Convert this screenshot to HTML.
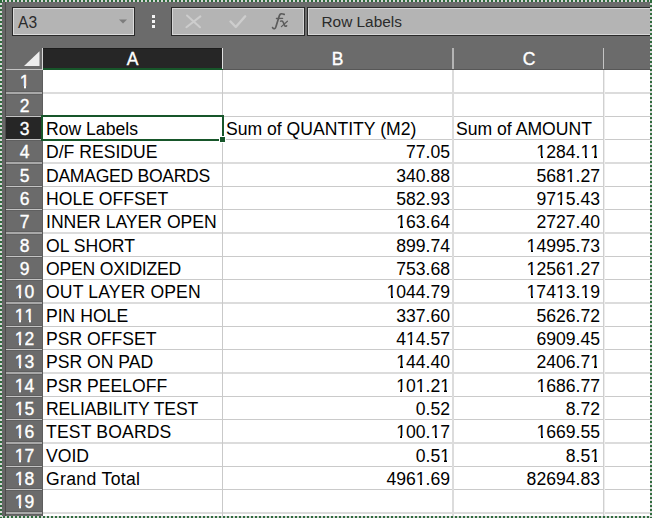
<!DOCTYPE html><html><head><meta charset="utf-8"><style>
*{margin:0;padding:0;box-sizing:border-box}
html,body{width:652px;height:518px;overflow:hidden}
body{position:relative;background:#6b6b6b;font-family:"Liberation Sans",sans-serif}
.a{position:absolute}
.t{position:absolute;white-space:nowrap;font-size:17.6px;line-height:20px;color:#000}
.r{text-align:right}
.o{position:relative}
.o::before,.o::after{content:"";position:absolute;bottom:0.13em;height:0.21em;background:var(--bg,#fff)}
.o::before{left:-0.03em;width:0.27em}
.o::after{left:0.36em;width:0.2em}
.h .o{--bg:#6b6b6b}
.h .o::before{width:0.275em}.h .o::after{left:0.352em;width:0.23em}
.h{position:absolute;white-space:nowrap;font-size:17.5px;line-height:20px;color:#fff;text-align:center;-webkit-text-stroke:0.35px #fff}
</style></head><body>

<div class="a" style="left:2px;top:2px;width:3px;height:514px;background:#666"></div>
<div class="a" style="left:5px;top:2px;width:1px;height:514px;background:#4b4b4b"></div>
<div class="a" style="left:12px;top:7px;width:123px;height:29px;background:#b4b4b4;border:1px solid #2a2a2a;box-shadow:inset 0 0 0 1px #dcdcdc"></div>
<div class="a" style="left:18px;top:13.6px;font-size:15.6px;line-height:17px;color:#2b2b2b">A3</div>
<svg class="a" style="left:118px;top:18px" width="10" height="7"><path d="M1 1.5 L9 1.5 L5 5.5 Z" fill="#7c7c7c"/></svg>
<div class="a" style="left:152px;top:15px;width:3px;height:3px;background:#f4f4f4"></div>
<div class="a" style="left:152px;top:20px;width:3px;height:3px;background:#f4f4f4"></div>
<div class="a" style="left:152px;top:25px;width:3px;height:3px;background:#f4f4f4"></div>
<div class="a" style="left:171px;top:7px;width:134px;height:29px;background:#b4b4b4;border:1px solid #2a2a2a;box-shadow:inset 0 0 0 1px #d6d6d6"></div>
<svg class="a" style="left:184px;top:14px" width="18" height="16"><path d="M3 1.5 L16 13.3 M16.4 2.4 L2.4 13.2" stroke="#cdcdcd" stroke-width="2" stroke-linecap="round" fill="none"/></svg>
<svg class="a" style="left:227px;top:12px" width="22" height="18"><path d="M3.5 9.5 L8.8 15 L18.2 4.3" stroke="#cdcdcd" stroke-width="2.4" stroke-linecap="round" stroke-linejoin="round" fill="none"/></svg>
<svg class="a" style="left:268px;top:10px" width="24" height="22"><g stroke="#5c5c5c" fill="none" stroke-linecap="round"><path d="M4.6 17.6 C5.8 19.6 7.4 18.8 8 16.6 L11.4 5.6 C12 3.6 13.6 3.3 16.2 4.4" stroke-width="1.7"/><path d="M8.4 8.5 L14.6 8.4" stroke-width="1.3"/><path d="M12.6 11.2 C14.2 10.4 14.8 11.2 15.4 12.6 L16.6 15.4 C17 16.4 17.6 16.6 18.6 15.8" stroke-width="1.5"/><path d="M19.4 11.2 L13.4 16.6" stroke-width="1.2"/></g></svg>
<div class="a" style="left:307px;top:7px;width:350px;height:29px;background:#b4b4b4;border:1px solid #2a2a2a;box-shadow:inset 0 0 0 1px #d6d6d6"></div>
<div class="a" style="left:321.5px;top:12.9px;font-size:15.4px;line-height:17px;color:#2b2b2b">Row Labels</div>
<div class="a" style="left:43px;top:48px;width:179px;height:20px;background:#262626"></div>
<div class="a" style="left:43px;top:48px;width:179px;height:1px;background:#1c1c1c"></div>
<div class="a" style="left:43px;top:68px;width:180px;height:2px;background:#17562a"></div>
<div class="a" style="left:223px;top:69px;width:427px;height:1px;background:#575757"></div>
<div class="a" style="left:42px;top:48px;width:1px;height:22px;background:#d8d8d8"></div>
<div class="a" style="left:222px;top:48px;width:1px;height:21px;background:#e0e0e0"></div>
<div class="a" style="left:452px;top:48px;width:2px;height:21px;background:#b4b4b4"></div>
<div class="a" style="left:603px;top:48px;width:1px;height:21px;background:#c4c4c4"></div>
<div class="h" style="left:43px;top:49.4px;width:179px;">A</div>
<div class="h" style="left:223px;top:49.4px;width:229px;">B</div>
<div class="h" style="left:454px;top:49.4px;width:150px;">C</div>
<svg class="a" style="left:22px;top:50px" width="20" height="18"><path d="M2 16 L17.5 16 L17.5 1.3 Z" fill="#ededed"/></svg>
<div class="a" style="left:43px;top:70px;width:607px;height:446px;background:#fff"></div>
<div class="a" style="left:6px;top:69px;width:36px;height:1px;background:#c4c4c4"></div>
<div class="a" style="left:43px;top:92px;width:607px;height:2px;background:#dcdcdc"></div>
<div class="a" style="left:6px;top:91px;width:36px;height:4px;background:#5f5f5f"></div>
<div class="a" style="left:6px;top:92px;width:36px;height:2px;background:#a8a8a8"></div>
<div class="a" style="left:43px;top:116px;width:607px;height:1px;background:#cacaca"></div>
<div class="a" style="left:6px;top:115px;width:36px;height:3px;background:#5f5f5f"></div>
<div class="a" style="left:6px;top:116px;width:36px;height:1px;background:#c4c4c4"></div>
<div class="a" style="left:43px;top:139px;width:607px;height:1px;background:#cacaca"></div>
<div class="a" style="left:6px;top:138px;width:36px;height:3px;background:#5f5f5f"></div>
<div class="a" style="left:6px;top:139px;width:36px;height:1px;background:#c4c4c4"></div>
<div class="a" style="left:43px;top:162px;width:607px;height:2px;background:#dcdcdc"></div>
<div class="a" style="left:6px;top:161px;width:36px;height:4px;background:#5f5f5f"></div>
<div class="a" style="left:6px;top:162px;width:36px;height:2px;background:#a8a8a8"></div>
<div class="a" style="left:43px;top:186px;width:607px;height:1px;background:#cacaca"></div>
<div class="a" style="left:6px;top:185px;width:36px;height:3px;background:#5f5f5f"></div>
<div class="a" style="left:6px;top:186px;width:36px;height:1px;background:#c4c4c4"></div>
<div class="a" style="left:43px;top:209px;width:607px;height:1px;background:#cacaca"></div>
<div class="a" style="left:6px;top:208px;width:36px;height:3px;background:#5f5f5f"></div>
<div class="a" style="left:6px;top:209px;width:36px;height:1px;background:#c4c4c4"></div>
<div class="a" style="left:43px;top:232px;width:607px;height:2px;background:#dcdcdc"></div>
<div class="a" style="left:6px;top:231px;width:36px;height:4px;background:#5f5f5f"></div>
<div class="a" style="left:6px;top:232px;width:36px;height:2px;background:#a8a8a8"></div>
<div class="a" style="left:43px;top:256px;width:607px;height:1px;background:#cacaca"></div>
<div class="a" style="left:6px;top:255px;width:36px;height:3px;background:#5f5f5f"></div>
<div class="a" style="left:6px;top:256px;width:36px;height:1px;background:#c4c4c4"></div>
<div class="a" style="left:43px;top:279px;width:607px;height:1px;background:#cacaca"></div>
<div class="a" style="left:6px;top:278px;width:36px;height:3px;background:#5f5f5f"></div>
<div class="a" style="left:6px;top:279px;width:36px;height:1px;background:#c4c4c4"></div>
<div class="a" style="left:43px;top:302px;width:607px;height:2px;background:#dcdcdc"></div>
<div class="a" style="left:6px;top:301px;width:36px;height:4px;background:#5f5f5f"></div>
<div class="a" style="left:6px;top:302px;width:36px;height:2px;background:#a8a8a8"></div>
<div class="a" style="left:43px;top:326px;width:607px;height:1px;background:#cacaca"></div>
<div class="a" style="left:6px;top:325px;width:36px;height:3px;background:#5f5f5f"></div>
<div class="a" style="left:6px;top:326px;width:36px;height:1px;background:#c4c4c4"></div>
<div class="a" style="left:43px;top:349px;width:607px;height:1px;background:#cacaca"></div>
<div class="a" style="left:6px;top:348px;width:36px;height:3px;background:#5f5f5f"></div>
<div class="a" style="left:6px;top:349px;width:36px;height:1px;background:#c4c4c4"></div>
<div class="a" style="left:43px;top:372px;width:607px;height:2px;background:#dcdcdc"></div>
<div class="a" style="left:6px;top:371px;width:36px;height:4px;background:#5f5f5f"></div>
<div class="a" style="left:6px;top:372px;width:36px;height:2px;background:#a8a8a8"></div>
<div class="a" style="left:43px;top:396px;width:607px;height:1px;background:#cacaca"></div>
<div class="a" style="left:6px;top:395px;width:36px;height:3px;background:#5f5f5f"></div>
<div class="a" style="left:6px;top:396px;width:36px;height:1px;background:#c4c4c4"></div>
<div class="a" style="left:43px;top:419px;width:607px;height:1px;background:#cacaca"></div>
<div class="a" style="left:6px;top:418px;width:36px;height:3px;background:#5f5f5f"></div>
<div class="a" style="left:6px;top:419px;width:36px;height:1px;background:#c4c4c4"></div>
<div class="a" style="left:43px;top:442px;width:607px;height:2px;background:#dcdcdc"></div>
<div class="a" style="left:6px;top:441px;width:36px;height:4px;background:#5f5f5f"></div>
<div class="a" style="left:6px;top:442px;width:36px;height:2px;background:#a8a8a8"></div>
<div class="a" style="left:43px;top:466px;width:607px;height:1px;background:#cacaca"></div>
<div class="a" style="left:6px;top:465px;width:36px;height:3px;background:#5f5f5f"></div>
<div class="a" style="left:6px;top:466px;width:36px;height:1px;background:#c4c4c4"></div>
<div class="a" style="left:43px;top:489px;width:607px;height:1px;background:#cacaca"></div>
<div class="a" style="left:6px;top:488px;width:36px;height:3px;background:#5f5f5f"></div>
<div class="a" style="left:6px;top:489px;width:36px;height:1px;background:#c4c4c4"></div>
<div class="a" style="left:43px;top:512px;width:607px;height:2px;background:#dcdcdc"></div>
<div class="a" style="left:6px;top:511px;width:36px;height:4px;background:#5f5f5f"></div>
<div class="a" style="left:6px;top:512px;width:36px;height:2px;background:#a8a8a8"></div>
<div class="a" style="left:222px;top:70px;width:1px;height:446px;background:#c9c9c9"></div>
<div class="a" style="left:452px;top:70px;width:2px;height:446px;background:#dcdcdc"></div>
<div class="a" style="left:603px;top:70px;width:1px;height:446px;background:#d0d0d0"></div>
<div class="a" style="left:604px;top:70px;width:1px;height:446px;background:#ececec"></div>
<div class="a" style="left:42px;top:70px;width:1px;height:446px;background:#5e5e5e"></div>
<div class="a" style="left:6px;top:117px;width:36px;height:22px;background:#262626"></div>
<div class="h" style="left:6.5px;top:72.17px;width:36px;"><span class="o">1</span></div>
<div class="h" style="left:6.5px;top:95.50px;width:36px;">2</div>
<div class="h" style="left:6.5px;top:118.84px;width:36px;">3</div>
<div class="t" style="left:46px;top:118.84px;letter-spacing:0px">Row Labels</div>
<div class="t" style="left:226px;top:118.84px">Sum of QUANTITY (M2)</div>
<div class="t" style="left:456px;top:118.84px">Sum of AMOUNT</div>
<div class="h" style="left:6.5px;top:142.17px;width:36px;">4</div>
<div class="t" style="left:46px;top:142.17px;letter-spacing:0px">D/F RESIDUE</div>
<div class="t r" style="right:202px;top:142.17px">77.05</div>
<div class="t r" style="right:52px;top:142.17px"><span class="o">1</span>284.<span class="o">1</span><span class="o">1</span></div>
<div class="h" style="left:6.5px;top:165.50px;width:36px;">5</div>
<div class="t" style="left:46px;top:165.50px;letter-spacing:-0.3px">DAMAGED BOARDS</div>
<div class="t r" style="right:202px;top:165.50px">340.88</div>
<div class="t r" style="right:52px;top:165.50px">568<span class="o">1</span>.27</div>
<div class="h" style="left:6.5px;top:188.83px;width:36px;">6</div>
<div class="t" style="left:46px;top:188.83px;letter-spacing:0px">HOLE OFFSET</div>
<div class="t r" style="right:202px;top:188.83px">582.93</div>
<div class="t r" style="right:52px;top:188.83px">97<span class="o">1</span>5.43</div>
<div class="h" style="left:6.5px;top:212.17px;width:36px;">7</div>
<div class="t" style="left:46px;top:212.17px;letter-spacing:0px">INNER LAYER OPEN</div>
<div class="t r" style="right:202px;top:212.17px"><span class="o">1</span>63.64</div>
<div class="t r" style="right:52px;top:212.17px">2727.40</div>
<div class="h" style="left:6.5px;top:235.50px;width:36px;">8</div>
<div class="t" style="left:46px;top:235.50px;letter-spacing:0px">OL SHORT</div>
<div class="t r" style="right:202px;top:235.50px">899.74</div>
<div class="t r" style="right:52px;top:235.50px"><span class="o">1</span>4995.73</div>
<div class="h" style="left:6.5px;top:258.83px;width:36px;">9</div>
<div class="t" style="left:46px;top:258.83px;letter-spacing:-0.21px">OPEN OXIDIZED</div>
<div class="t r" style="right:202px;top:258.83px">753.68</div>
<div class="t r" style="right:52px;top:258.83px"><span class="o">1</span>256<span class="o">1</span>.27</div>
<div class="h" style="left:6.5px;top:282.17px;width:36px;"><span class="o">1</span>0</div>
<div class="t" style="left:46px;top:282.17px;letter-spacing:0.14px">OUT LAYER OPEN</div>
<div class="t r" style="right:202px;top:282.17px"><span class="o">1</span>044.79</div>
<div class="t r" style="right:52px;top:282.17px"><span class="o">1</span>74<span class="o">1</span>3.<span class="o">1</span>9</div>
<div class="h" style="left:6.5px;top:305.50px;width:36px;"><span class="o">1</span><span class="o">1</span></div>
<div class="t" style="left:46px;top:305.50px;letter-spacing:0px">PIN HOLE</div>
<div class="t r" style="right:202px;top:305.50px">337.60</div>
<div class="t r" style="right:52px;top:305.50px">5626.72</div>
<div class="h" style="left:6.5px;top:328.83px;width:36px;"><span class="o">1</span>2</div>
<div class="t" style="left:46px;top:328.83px;letter-spacing:0px">PSR OFFSET</div>
<div class="t r" style="right:202px;top:328.83px">4<span class="o">1</span>4.57</div>
<div class="t r" style="right:52px;top:328.83px">6909.45</div>
<div class="h" style="left:6.5px;top:352.17px;width:36px;"><span class="o">1</span>3</div>
<div class="t" style="left:46px;top:352.17px;letter-spacing:0px">PSR ON PAD</div>
<div class="t r" style="right:202px;top:352.17px"><span class="o">1</span>44.40</div>
<div class="t r" style="right:52px;top:352.17px">2406.7<span class="o">1</span></div>
<div class="h" style="left:6.5px;top:375.50px;width:36px;"><span class="o">1</span>4</div>
<div class="t" style="left:46px;top:375.50px;letter-spacing:0px">PSR PEELOFF</div>
<div class="t r" style="right:202px;top:375.50px"><span class="o">1</span>0<span class="o">1</span>.2<span class="o">1</span></div>
<div class="t r" style="right:52px;top:375.50px"><span class="o">1</span>686.77</div>
<div class="h" style="left:6.5px;top:398.83px;width:36px;"><span class="o">1</span>5</div>
<div class="t" style="left:46px;top:398.83px;letter-spacing:-0.1px">RELIABILITY TEST</div>
<div class="t r" style="right:202px;top:398.83px">0.52</div>
<div class="t r" style="right:52px;top:398.83px">8.72</div>
<div class="h" style="left:6.5px;top:422.17px;width:36px;"><span class="o">1</span>6</div>
<div class="t" style="left:46px;top:422.17px;letter-spacing:0.15px">TEST BOARDS</div>
<div class="t r" style="right:202px;top:422.17px"><span class="o">1</span>00.<span class="o">1</span>7</div>
<div class="t r" style="right:52px;top:422.17px"><span class="o">1</span>669.55</div>
<div class="h" style="left:6.5px;top:445.50px;width:36px;"><span class="o">1</span>7</div>
<div class="t" style="left:46px;top:445.50px;letter-spacing:0px">VOID</div>
<div class="t r" style="right:202px;top:445.50px">0.5<span class="o">1</span></div>
<div class="t r" style="right:52px;top:445.50px">8.5<span class="o">1</span></div>
<div class="h" style="left:6.5px;top:468.83px;width:36px;"><span class="o">1</span>8</div>
<div class="t" style="left:46px;top:468.83px;letter-spacing:0.34px">Grand Total</div>
<div class="t r" style="right:202px;top:468.83px">496<span class="o">1</span>.69</div>
<div class="t r" style="right:52px;top:468.83px">82694.83</div>
<div class="h" style="left:6.5px;top:492.16px;width:36px;"><span class="o">1</span>9</div>
<div class="a" style="left:41px;top:115px;width:183px;height:26px;border:2px solid #17562a"></div>
<div class="a" style="left:219px;top:136px;width:7px;height:7px;background:#17562a;border:1px solid #fff"></div>
<div class="a" style="left:0;top:0;width:652px;height:2px;background:repeating-linear-gradient(90deg,#2f6c3d 0 2px,#d6d6d6 2px 4px);background-position:3px 0"></div>
<div class="a" style="left:0;top:516px;width:652px;height:2px;background:repeating-linear-gradient(90deg,#2f6c3d 0 2px,#d6d6d6 2px 4px);background-position:3px 0"></div>
<div class="a" style="left:0;top:0;width:2px;height:518px;background:repeating-linear-gradient(180deg,#2f6c3d 0 2px,#d6d6d6 2px 4px);background-position:0 1px"></div>
<div class="a" style="left:650px;top:0;width:2px;height:518px;background:repeating-linear-gradient(180deg,#2f6c3d 0 2px,#d6d6d6 2px 4px);background-position:0 1px"></div>
</body></html>
